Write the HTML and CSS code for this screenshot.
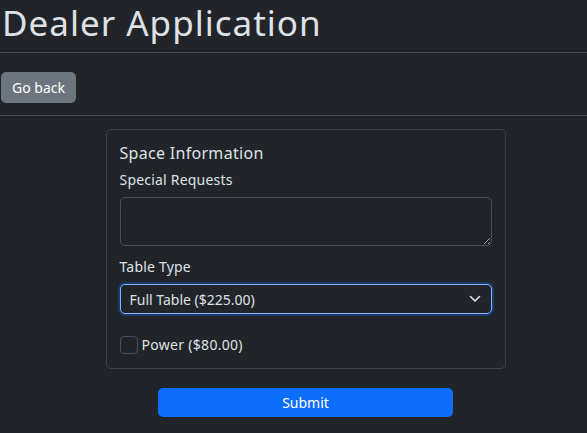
FILE: index.html
```html
<!DOCTYPE html>
<html lang="en">
<head>
  <meta charset="UTF-8">
  <title>Dealer Application</title>
  <link rel="stylesheet" href="styles.css">
</head>
<body>

  <h1>Dealer Application</h1>
  <hr>
  <button class="btn-back">Go back</button>
  <hr class="hr-bottom">

  <form class="application">
    <div class="card">
      <h5>Space Information</h5>

      <label for="requests">Special Requests</label>
      <textarea id="requests"></textarea>

      <label for="table">Table Type</label>
      <div class="select-wrap">
        <select id="table">
          <option>Full Table ($225.00)</option>
          <option>Half Table ($125.00)</option>
        </select>
        <svg class="chevron" width="12" height="8" viewBox="0 0 12 8">
          <path d="M1.5 1.5 L6 6 L10.5 1.5" fill="none" stroke="#dee2e6" stroke-width="1.6" stroke-linecap="round" stroke-linejoin="round"/>
        </svg>
      </div>

      <div class="check">
        <input type="checkbox" id="power">
        <label for="power">Power ($80.00)</label>
      </div>
    </div>

    <button type="button" class="btn-submit">Submit</button>
  </form>

</body>
</html>
```

FILE: styles.css
```css
* {
  box-sizing: border-box;
}

body {
  margin: 0;
  background: #212529;
  color: #dee2e6;
  font-family: 'Noto Sans', sans-serif;
  font-size: 14px;
}

h1 {
  margin: 0;
  padding: 1px 0 0 2px;
  font-size: 35px;
  font-weight: 400;
  line-height: 44px;
  letter-spacing: 1px;
}

hr {
  border: none;
  border-top: 1px solid #4b4f54;
  margin: 7px 0 19px;
}

.hr-bottom {
  margin: 12px 0 13px;
}

.btn-back {
  margin-left: 1px;
  background: #6c757d;
  color: #fff;
  border: none;
  border-radius: 5px;
  height: 31px;
  padding: 0 11px;
  font-family: inherit;
  font-size: 14px;
}

.application {
  width: 400px;
  margin-left: calc(50% - 188px);
}

.card {
  border: 1px solid #3e4247;
  border-radius: 5px;
  padding: 12px 13px 14px;
}

.card h5 {
  margin: 0 0 6px;
  font-size: 16px;
  font-weight: 400;
  line-height: 22px;
  letter-spacing: 0.3px;
}

.card > label {
  display: block;
  font-size: 14px;
  line-height: 20px;
  margin-bottom: 7px;
  letter-spacing: 0.2px;
}

textarea {
  display: block;
  width: 372px;
  height: 49px;
  background: #212529;
  border: 1px solid #495057;
  border-radius: 5px;
  color: #dee2e6;
  margin-bottom: 11px;
  resize: vertical;
}

.select-wrap {
  position: relative;
  width: 372px;
}

select {
  display: block;
  width: 100%;
  height: 30px;
  appearance: none;
  background: #212529;
  color: #dee2e6;
  border: 1px solid #86b7fe;
  border-radius: 5px;
  box-shadow: 0 0 0 2px rgba(13, 110, 253, 0.3);
  padding: 0 9px;
  font-family: inherit;
  font-size: 14px;
  outline: none;
}

.chevron {
  position: absolute;
  right: 11px;
  top: 11px;
}

.check {
  display: flex;
  align-items: center;
  gap: 4px;
  margin-top: 21px;
}

.check input {
  appearance: none;
  width: 18px;
  height: 18px;
  margin: 0;
  border: 1px solid #495057;
  border-radius: 4px;
  background: #212529;
}

.check label {
  font-size: 14px;
  letter-spacing: 0.3px;
}

.btn-submit {
  display: block;
  width: 295px;
  height: 29px;
  margin: 19px auto 0;
  background: #0d6efd;
  color: #fff;
  border: none;
  border-radius: 5px;
  font-family: inherit;
  font-size: 14px;
}
```
